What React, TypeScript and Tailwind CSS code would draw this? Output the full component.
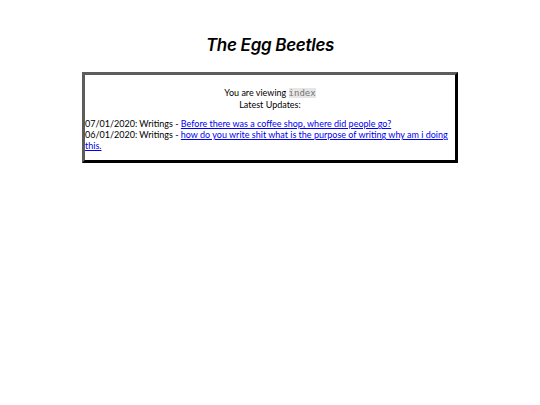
export default function App() {
  return (
    <div className="min-h-[405px] bg-white text-black" style={{ fontFamily: "Lato, 'Noto Sans', sans-serif" }}>
      <h1
        className="pt-[34px] text-center text-[17px] leading-[22px] font-semibold italic tracking-[-0.3px]"
        style={{ fontFamily: "Inter, sans-serif" }}
      >
        The Egg Beetles
      </h1>
      <div className="mx-auto mt-[16px] w-[376px] border-[3px] border-t-[#5c5c5c] border-l-[#5c5c5c] border-r-black border-b-black pt-[12px] pb-[9px] text-[9px] leading-[11px]">
        <div className="text-center">
          You are viewing{" "}
          <span className="bg-[#e6e6e6] text-[#777]" style={{ fontFamily: "'DejaVu Sans Mono', monospace" }}>
            index
          </span>
        </div>
        <div className="text-center">Latest Updates:</div>
        <div className="h-[8px]" />
        <div>
          07/01/2020: Writings -{" "}
          <a href="#" className="text-[#0000ee] underline">
            Before there was a coffee shop, where did people go?
          </a>
        </div>
        <div>
          06/01/2020: Writings -{" "}
          <a href="#" className="text-[#0000ee] underline">
            how do you write shit what is the purpose of writing why am i doing this.
          </a>
        </div>
      </div>
    </div>
  );
}
